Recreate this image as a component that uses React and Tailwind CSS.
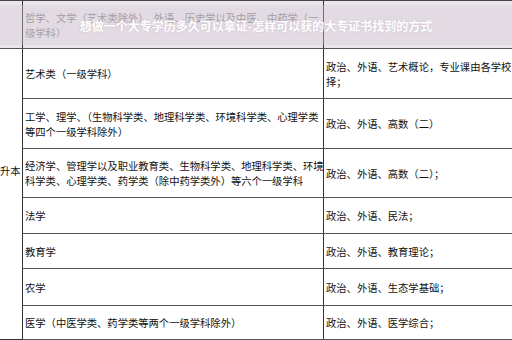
export default function App() {
  const rows = [
    { h: 'h-[50px]', mid: ['艺术类（一级学科）'], right: ['政治、外语、艺术概论，专业课由各学校', '择；'] },
    {
      h: 'h-[50px]',
      mid: ['工学、理学、（生物科学类、地理科学类、环境科学类、心理学类', '等四个一级学科除外）'],
      right: ['政治、外语、高数（二）'],
    },
    {
      h: 'h-[49px]',
      mid: ['经济学、管理学以及职业教育类、生物科学类、地理科学类、环境', '科学类、心理学类、药学类（除中药学类外）等六个一级学科'],
      right: ['政治、外语、高数（二）；'],
    },
    { h: 'h-[36px]', mid: ['法学'], right: ['政治、外语、民法；'] },
    { h: 'h-[35px]', mid: ['教育学'], right: ['政治、外语、教育理论；'] },
    { h: 'h-[37px]', mid: ['农学'], right: ['政治、外语、生态学基础；'] },
    { h: 'h-[34px]', mid: ['医学（中医学类、药学类等两个一级学科除外）'], right: ['政治、外语、医学综合；'] },
  ];

  const lines = (arr) =>
    arr.map((t, i) => (
      <div key={i} className="whitespace-nowrap">
        {t}
      </div>
    ));

  return (
    <div className="relative h-[340px] w-[512px] overflow-hidden bg-white font-['Noto_Sans_CJK_SC',sans-serif] text-[10.3px] leading-[15px] text-[#111]">
      <div className="border-t border-[#444]">
        {/* faded first row */}
        <div className="flex h-[48px] border-b border-[#555] bg-[#ebe6eb] text-[#858085]">
          <div className="w-[23px] shrink-0 border-r border-[#333]" />
          <div className="flex w-[301px] shrink-0 flex-col justify-center border-r border-[#333] pl-[2px]">
            {lines(['哲学、文学（艺术类除外）、外语、历史学以及中医、中药学（一', '级学科）'])}
          </div>
          <div className="flex-1" />
        </div>

        <div className="flex">
          <div className="w-[23px] shrink-0 border-r border-b border-[#333] pt-[114px] text-right pr-[5px]">
            <span className="whitespace-nowrap">升本</span>
          </div>
          <div className="flex flex-1 flex-col">
            {rows.map((r, i) => (
              <div key={i} className={`flex ${r.h} border-b border-[#555]`}>
                <div className="flex w-[301px] shrink-0 flex-col justify-center border-r border-[#333] pl-[2px]">
                  {lines(r.mid)}
                </div>
                <div className="flex flex-1 flex-col justify-center pl-[2px]">{lines(r.right)}</div>
              </div>
            ))}
          </div>
        </div>
      </div>

      {/* title overlay */}
      <div className="absolute left-0 right-0 top-[5px] flex h-[40px] items-center justify-center bg-[#d8cbd8]/40">
        <span className="whitespace-nowrap text-[12px] font-bold text-white [text-shadow:0_0_2px_rgba(180,160,180,0.6)]">
          想做一个大专学历多久可以拿证-怎样可以获的大专证书找到的方式
        </span>
      </div>
    </div>
  );
}
